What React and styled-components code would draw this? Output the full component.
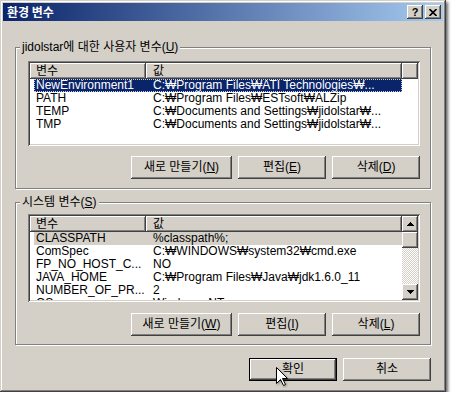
import React from "react";
import styled, { createGlobalStyle } from "styled-components";

const GlobalStyle = createGlobalStyle`
    html, body {
        margin: 0;
        padding: 0;
        background: #fff;
    }
    body {
        font-family: "Liberation Sans", "DejaVu Sans", "Noto Sans CJK KR", sans-serif;
        font-size: 12px;
        color: #000;
    }
`

const raised = `
    box-shadow: inset -1px -1px #404040, inset 1px 1px #fff, inset -2px -2px #808080, inset 2px 2px #D4D0C8;
`

const Window = styled.div`
    position: relative;
    width: 446px;
    height: 392px;
    box-sizing: border-box;
    padding: 3px;
    background: #D4D0C8;
    display: flex;
    flex-direction: column;
    box-shadow: inset -1px -1px #404040, inset 1px 1px #D4D0C8, inset -2px -2px #808080, inset 2px 2px #fff, 2px 2px 3px rgba(0, 0, 0, 0.6);
`

const TitleBar = styled.div`
    height: 18px;
    flex-shrink: 0;
    display: flex;
    align-items: center;
    padding: 0 2px;
    background: linear-gradient(to right, #0A246A, #A6CAF0);
`

const Title = styled.span`
    flex: 1;
    padding-left: 2px;
    color: #fff;
    font-family: "Noto Sans CJK KR", sans-serif;
    font-weight: bold;
    font-size: 12px;
    line-height: 18px;
`

const CaptionButton = styled.div`
    width: 16px;
    height: 14px;
    box-sizing: border-box;
    background: #D4D0C8;
    ${raised}
    display: flex;
    align-items: center;
    justify-content: center;
    font-family: "Liberation Sans", sans-serif;
    font-weight: bold;
    font-size: 11px;
    line-height: 14px;
    & + & {
        margin-left: 2px;
    }
`

const Body = styled.div`
    display: flex;
    flex-direction: column;
    padding: 0 12px;
`

const Group = styled.fieldset`
    margin: ${p => p.$top}px 0 0;
    padding: 0;
    min-width: 0;
    border: 1px solid #808080;
    box-shadow: inset 1px 1px #fff, 1px 1px #fff;
`

const Legend = styled.legend`
    margin-left: 4px;
    padding: 0 2px;
    height: 13px;
    line-height: 13px;
    background: #D4D0C8;
    font-size: 12px;
`

const GroupContent = styled.div`
    display: flex;
    flex-direction: column;
    padding: ${p => p.$pt}px 10px ${p => p.$pb}px 12px;
`

const List = styled.div`
    height: ${p => p.$h}px;
    box-sizing: border-box;
    padding: 2px;
    background: #fff;
    display: flex;
    overflow: hidden;
    box-shadow: inset 1px 1px #808080, inset -1px -1px #fff, inset 2px 2px #404040, inset -2px -2px #D4D0C8;
`

const ListMain = styled.div`
    flex: 1;
    min-width: 0;
    display: flex;
    flex-direction: column;
    overflow: hidden;
`

const HeaderRow = styled.div`
    display: flex;
    height: 16px;
    flex-shrink: 0;
`

const HeaderCell = styled.div`
    width: ${p => p.$w ? `${p.$w}px` : "auto"};
    flex: ${p => p.$w ? "none" : 1};
    box-sizing: border-box;
    padding-left: ${p => p.$pad}px;
    background: #D4D0C8;
    line-height: 16px;
    white-space: nowrap;
    box-shadow: inset -1px -1px #404040, inset 1px 1px #fff, inset -2px -2px #808080;
`

const Row = styled.div`
    display: flex;
    width: 368px;
    height: 13px;
    margin-left: 4px;
    line-height: 13px;
    white-space: nowrap;
    flex-shrink: 0;
    background: ${p => p.$state === "active" ? "#0A246A" : p.$state === "inactive" ? "#D4D0C8" : "transparent"};
    color: ${p => p.$state === "active" ? "#fff" : "#000"};
    outline: ${p => p.$state === "active" ? "1px dotted #c8cce0" : "none"};
    outline-offset: -1px;
`

const Cell = styled.div`
    width: ${p => p.$w}px;
    box-sizing: border-box;
    padding-left: ${p => p.$pad}px;
    overflow: hidden;
`

const ScrollBar = styled.div`
    width: 16px;
    flex-shrink: 0;
    display: flex;
    flex-direction: column;
`

const ScrollBox = styled.div`
    height: 16px;
    flex-shrink: 0;
    box-sizing: border-box;
    background: #D4D0C8;
    ${raised}
    display: flex;
    align-items: center;
    justify-content: center;
`

const Track = styled.div`
    flex: 1;
    background: repeating-conic-gradient(#D4D0C8 0 25%, #fff 0 50%) 0 0 / 2px 2px;
`

const ButtonRow = styled.div`
    display: flex;
    justify-content: flex-end;
    gap: 6px;
    margin-top: ${p => p.$top}px;
`

const Button = styled.div`
    width: ${p => p.$w || 88}px;
    height: 23px;
    box-sizing: border-box;
    background: #D4D0C8;
    display: flex;
    align-items: center;
    justify-content: center;
    font-size: 12px;
    line-height: 13px;
    white-space: nowrap;
    box-shadow: ${p => p.$default
        ? "inset 0 0 0 1px #000, inset -2px -2px #404040, inset 2px 2px #fff, inset -3px -3px #808080"
        : "inset -1px -1px #404040, inset 1px 1px #fff, inset -2px -2px #808080, inset 2px 2px #D4D0C8"};
`

const Cursor = styled.svg`
    position: absolute;
    left: 276px;
    top: 367px;
    filter: drop-shadow(1px 1px 1px rgba(0, 0, 0, 0.35));
`

const Arrow = ({ down }) => (
    <svg width="7" height="4" viewBox="0 0 7 4" shapeRendering="crispEdges">
        <polygon points={down ? "0,0 7,0 3.5,4" : "3.5,0 7,4 0,4"} fill="#000" />
    </svg>
)

const userVars = [
    ["NewEnvironment1", "C:₩Program Files₩ATI Technologies₩...", "active"],
    ["PATH", "C:₩Program Files₩ESTsoft₩ALZip"],
    ["TEMP", "C:₩Documents and Settings₩jidolstar₩..."],
    ["TMP", "C:₩Documents and Settings₩jidolstar₩..."],
]

const systemVars = [
    ["CLASSPATH", "%classpath%;", "inactive"],
    ["ComSpec", "C:₩WINDOWS₩system32₩cmd.exe"],
    ["FP_NO_HOST_C...", "NO"],
    ["JAVA_HOME", "C:₩Program Files₩Java₩jdk1.6.0_11"],
    ["NUMBER_OF_PR...", "2"],
    ["OS", "Windows_NT"],
]

const VarList = ({ rows, height, scroll }) => (
    <List $h={height}>
        <ListMain>
            <HeaderRow>
                <HeaderCell $w={116} $pad={6}>변수</HeaderCell>
                <HeaderCell $w={256} $pad={7}>값</HeaderCell>
                {!scroll && <HeaderCell />}
            </HeaderRow>
            {rows.map(([name, value, state]) => (
                <Row key={name} $state={state}>
                    <Cell $w={112} $pad={2}>{name}</Cell>
                    <Cell $w={256} $pad={7}>{value}</Cell>
                </Row>
            ))}
        </ListMain>
        {scroll && (
            <ScrollBar>
                <ScrollBox><Arrow /></ScrollBox>
                <ScrollBox />
                <Track />
                <ScrollBox><Arrow down /></ScrollBox>
            </ScrollBar>
        )}
    </List>
)

export default function App() {
    return (
        <>
            <GlobalStyle />
            <Window>
                <TitleBar>
                    <Title>환경 변수</Title>
                    <CaptionButton>?</CaptionButton>
                    <CaptionButton>
                        <svg width="8" height="7" viewBox="0 0 8 7">
                            <path d="M0.5 0 L7.5 7 M7.5 0 L0.5 7" stroke="#000" strokeWidth="1.6" />
                        </svg>
                    </CaptionButton>
                </TitleBar>
                <Body>
                    <Group $top={20}>
                        <Legend>jidolstar에 대한 사용자 변수(<u>U</u>)</Legend>
                        <GroupContent $pt={7} $pb={9}>
                            <VarList rows={userVars} height={85} />
                            <ButtonRow $top={10}>
                                <Button $w={101}>새로 만들기(<u>N</u>)</Button>
                                <Button>편집(<u>E</u>)</Button>
                                <Button>삭제(<u>D</u>)</Button>
                            </ButtonRow>
                        </GroupContent>
                    </Group>
                    <Group $top={7}>
                        <Legend>시스템 변수(<u>S</u>)</Legend>
                        <GroupContent $pt={5} $pb={8}>
                            <VarList rows={systemVars} height={88} scroll />
                            <ButtonRow $top={11}>
                                <Button $w={101}>새로 만들기(<u>W</u>)</Button>
                                <Button>편집(<u>I</u>)</Button>
                                <Button>삭제(<u>L</u>)</Button>
                            </ButtonRow>
                        </GroupContent>
                    </Group>
                    <ButtonRow $top={13}>
                        <Button $default>확인</Button>
                        <Button>취소</Button>
                    </ButtonRow>
                </Body>
                <Cursor width="13" height="20" viewBox="0 0 13 20">
                    <path d="M0.5 0.5 L0.5 16.5 L4.5 12.5 L7.5 18.5 L9.5 17.5 L6.5 11.5 L11.5 11.5 Z" fill="#fff" stroke="#000" strokeWidth="1" />
                </Cursor>
            </Window>
        </>
    )
}
